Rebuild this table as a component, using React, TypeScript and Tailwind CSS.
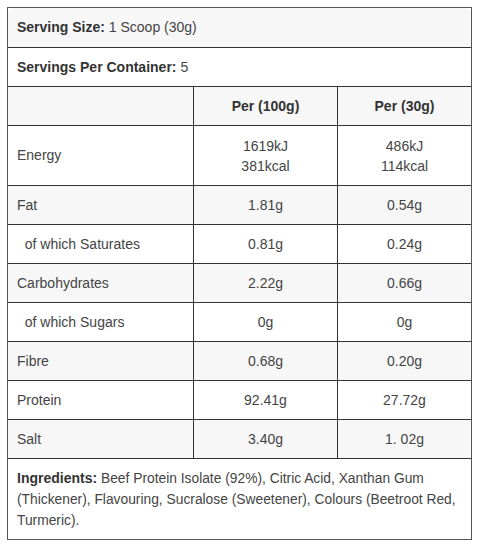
import React from 'react';

type Row = { label: string; per100: string[]; per30: string[]; indent?: boolean };

const rows: Row[] = [
  { label: 'Energy', per100: ['1619kJ', '381kcal'], per30: ['486kJ', '114kcal'] },
  { label: 'Fat', per100: ['1.81g'], per30: ['0.54g'] },
  { label: 'of which Saturates', per100: ['0.81g'], per30: ['0.24g'], indent: true },
  { label: 'Carbohydrates', per100: ['2.22g'], per30: ['0.66g'] },
  { label: 'of which Sugars', per100: ['0g'], per30: ['0g'], indent: true },
  { label: 'Fibre', per100: ['0.68g'], per30: ['0.20g'] },
  { label: 'Protein', per100: ['92.41g'], per30: ['27.72g'] },
  { label: 'Salt', per100: ['3.40g'], per30: ['1. 02g'] },
];

const cellCls = 'flex flex-col justify-center border-l border-[#333]';

const App: React.FC = () => {
  return (
    <div className="p-[7px] bg-white" style={{ fontFamily: '"Liberation Sans", Arial, sans-serif' }}>
      <div className="w-[465px] border border-[#555] text-[14px] text-[#444]">
        <div className="rounded-[6px] overflow-hidden">
          <div className="h-[40px] flex items-center px-[9px] bg-[#f7f7f8] border-b border-[#333]">
            <span className="font-bold text-[#333]">Serving Size:</span>&nbsp;1 Scoop (30g)
          </div>
          <div className="h-[39px] flex items-center px-[9px] bg-white border-b border-[#333]">
            <span className="font-bold text-[#333]">Servings Per Container:</span>&nbsp;5
          </div>
          {/* table head */}
          <div className="grid grid-cols-[185px_144px_134px] h-[39px] bg-[#f7f7f8] border-b border-[#333]">
            <div />
            <div className={`${cellCls} items-center font-bold text-[#333]`}>Per (100g)</div>
            <div className={`${cellCls} items-center font-bold text-[#333]`}>Per (30g)</div>
          </div>
          {rows.map((r, i) => (
            <div
              key={r.label}
              className={`grid grid-cols-[185px_144px_134px] border-b border-[#333] ${
                r.per100.length > 1 ? 'h-[60px]' : 'h-[39px]'
              } ${i % 2 === 0 ? 'bg-white' : 'bg-[#f7f7f8]'}`}
            >
              <div className="flex items-center px-[9px]">
                {r.indent ? '\u00a0\u00a0' : ''}
                {r.label}
              </div>
              <div className={`${cellCls} items-center leading-[20px]`}>
                {r.per100.map((v) => (
                  <span key={v}>{v}</span>
                ))}
              </div>
              <div className={`${cellCls} items-center leading-[20px]`}>
                {r.per30.map((v) => (
                  <span key={v}>{v}</span>
                ))}
              </div>
            </div>
          ))}
          <div className="h-[80px] px-[9px] pt-[9px] text-[13.8px] leading-[21px] bg-white">
            <span className="font-bold text-[14px] text-[#333]">Ingredients:</span> Beef Protein Isolate (92%), Citric Acid, Xanthan Gum
            (Thickener), Flavouring, Sucralose (Sweetener), Colours (Beetroot Red, Turmeric).
          </div>
        </div>
      </div>
    </div>
  );
};

export default App;
